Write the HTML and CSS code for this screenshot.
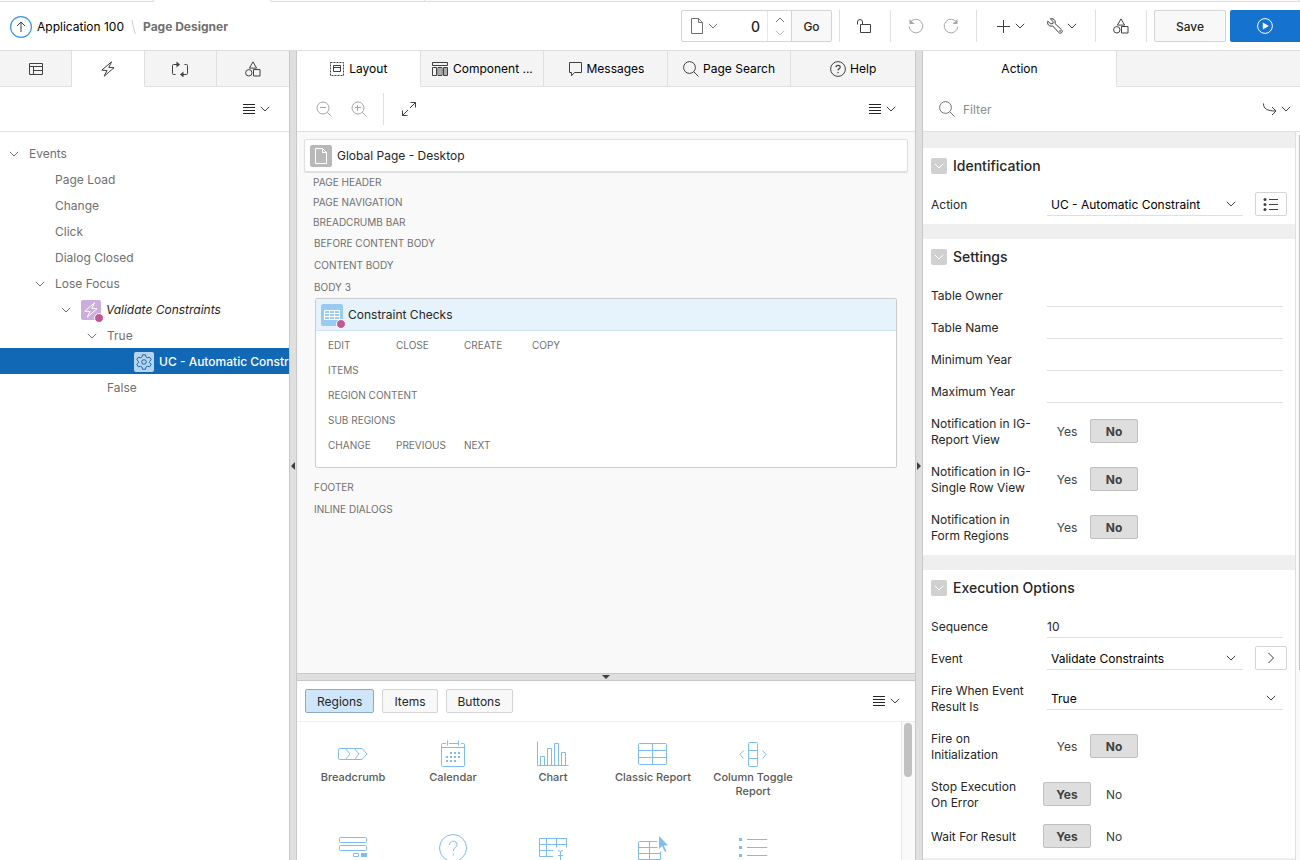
FILE: index.html
```html
<!DOCTYPE html>
<html lang="en">

<head>
    <meta charset="UTF-8">
    <meta name="viewport" content="width=device-width, initial-scale=1.0">
    <title>Page Designer</title>
    <link rel="stylesheet" href="styles.css">
</head>

<body>
    <!-- Icon definitions -->
    <svg class="sprite" aria-hidden="true">
        <symbol id="i-chev" viewBox="0 0 10 10"><path d="M.8 2.8 5 7 9.2 2.8" /></symbol>
        <symbol id="i-chev-up" viewBox="0 0 10 10"><path d="M1 7l4-4 4 4" /></symbol>
        <symbol id="i-chev-right" viewBox="0 0 16 16"><path d="M5.5 3l5 5-5 5" /></symbol>
        <symbol id="i-up" viewBox="0 0 22 22"><circle cx="11" cy="11" r="10.4" stroke="#3b97e3" stroke-width="1.2" /><path d="M11 16V6M7 10l4-4 4 4" /></symbol>
        <symbol id="i-page" viewBox="0 0 16 16"><path d="M2.5.5h7l4 4v11h-11zM9.5.5v4h4" /></symbol>
        <symbol id="i-lock" viewBox="0 0 16 16"><path d="M4.5 6.5h10v8h-10zM6.500 6.500V4A2.500 2.500 0 0 0 1.500 4v2.500" /></symbol>
        <symbol id="i-undo" viewBox="0 0 16 16"><path d="M2.2 4.5A6.8 6.8 0 1 1 1.2 8.5" /><path d="M1.5 1v5h5z" fill="currentColor" stroke="none" /></symbol>
        <symbol id="i-redo" viewBox="0 0 16 16"><path d="M13.8 4.5a6.8 6.8 0 1 0 1 4" /><path d="M14.5 1v5h-5z" fill="currentColor" stroke="none" /></symbol>
        <symbol id="i-plus" viewBox="0 0 16 16"><path d="M8.5 2v13M2 8.5h13" /></symbol>
        <symbol id="i-wrench" viewBox="0 0 16 16"><path d="M3.4.9l2.8 2.7-.3 2-2.1.3L.8 3.2C.1 5 .9 7.2 2.700 7.900c1 .4 2 .4 2.900 0l6.200 6.700c.9.900 2.200.800 2.900.100s.8-2-.1-2.900L8 5.500c.4-1 .3-2-.1-2.900C7.100.900 5.200.200 3.400.900z" /><circle cx="13" cy="13" r=".4" /></symbol>
        <symbol id="i-shapes" viewBox="0 0 16 16"><path d="M8 .9l3.600 6.200H4.400zM8.500 8.500h6.500V15H8.500z" /><circle cx="3.800" cy="11.800" r="3.200" /></symbol>
        <symbol id="i-run" viewBox="0 0 16 16"><circle cx="8" cy="8" r="7.400" /><path d="M5.800 4.400v7.200L11.800 8z" fill="currentColor" stroke="none" /></symbol>
        <symbol id="i-layout-tree" viewBox="0 0 16 16"><path d="M1.500 2.500h13v11h-13zM1.500 5.500h13M5.500 5.500v8M5.500 9.500h9" /></symbol>
        <symbol id="i-bolt" viewBox="0 0 16 16"><path d="M11.500.800L1.800 9.200l5.300.300-3 5.700 10-8.500-5.300-.3z" /></symbol>
        <symbol id="i-process" viewBox="0 0 18 16"><path d="M4.500 13.500h-2q-1 0-1-1v-8q0-1 1-1H6M13.500 3.500h2q1 0 1 1v8q0 1-1 1H12" /><path d="M5.500.500v6L9 3.500zM12.500 10.500v6L9 13.500z" fill="currentColor" stroke="none" /></symbol>
        <symbol id="i-menu" viewBox="0 0 12 12"><path d="M0 1.500h12M0 4.500h12M0 7.500h12M0 10.500h12" /></symbol>
        <symbol id="i-region" viewBox="0 0 16 16"><rect x="1.500" y="1.500" width="13" height="13" stroke-dasharray="2 1" /><path d="M4.500 4.500h7v6h-7zM4.500 6.500h7" /></symbol>
        <symbol id="i-component" viewBox="0 0 18 16"><path d="M1.500 1.500h15v3h-15zM1.500 6.500h4v8h-4zM7 6.500h4v8H7zM12.500 6.500h4v8h-4z" /><path d="M7.500 7h3v7h-3zM13 7h3v7h-3z" fill="#aaa" stroke="none" /></symbol>
        <symbol id="i-message" viewBox="0 0 16 16"><path d="M2.500 1.500h12v10h-7l-3 3.300v-3.300h-2z" /></symbol>
        <symbol id="i-search" viewBox="0 0 16 16"><circle cx="6.500" cy="6.500" r="5.900" /><path d="M10.800 10.800l4.700 4.700" /></symbol>
        <symbol id="i-help" viewBox="0 0 16 16"><circle cx="8" cy="8" r="7.400" /><path d="M6 6.300C6 3.600 10.200 3.700 10.200 6.200c0 1.600-2.200 1.600-2.200 3.300M8 11v1.200" stroke-width="1.200" /></symbol>
        <symbol id="i-zoom-out" viewBox="0 0 16 16"><circle cx="7" cy="7" r="6" /><path d="M4 6.500h6M11.300 11.300l4.200 4.200" /></symbol>
        <symbol id="i-zoom-in" viewBox="0 0 16 16"><circle cx="7" cy="7" r="6" /><path d="M4 6.500h6M6.500 4v6M11.300 11.300l4.200 4.200" /></symbol>
        <symbol id="i-expand" viewBox="0 0 16 16"><path d="M9.500 1.500h5v5M14.500 1.500L9 7M1.500 9.500v5h5M1.500 14.500L7 9" /></symbol>
        <symbol id="i-goto" viewBox="0 0 16 16"><path d="M1.500 2.500c0 5 3 7.500 12.500 7.500M10 6l4 4-4 4" /></symbol>
        <symbol id="i-gear" viewBox="0 0 16 16"><path d="M6.500.800h3l.5 2.100 1.600.900 2.100-.600 1.500 2.600-1.600 1.500v1.500l1.600 1.500-1.500 2.500-2.100-.6-1.600.9-.5 2.100h-3L6 13.100l-1.600-.9-2.100.6-1.500-2.500 1.600-1.500V7.300L.8 5.800l1.500-2.600 2.100.600 1.600-.900z" /><circle cx="8" cy="8" r="2.300" /></symbol>
        <symbol id="i-grid" viewBox="0 0 16 16"><path d="M.500 3.500h15v9H.500zM.500 6.500h15M.500 9.500h15M5.500 3.500v9M10.500 3.500v9" /></symbol>
        <symbol id="i-list" viewBox="0 0 16 16"><path d="M6 3.500h9M6 8.500h9M6 13.500h9" /><g fill="currentColor" stroke="none"><circle cx="2" cy="3.500" r="1.500" /><circle cx="2" cy="8.500" r="1.500" /><circle cx="2" cy="13.500" r="1.500" /></g></symbol>
        <symbol id="g-breadcrumb" viewBox="0 0 32 32"><path d="M2.500 10.500h22.500l5 5.500-5 5.500H2.500q-1 0-1-1v-9q0-1 1-1zM8.500 10.500l4.500 5.500-4.500 5.500M17.500 10.500l4.500 5.500-4.500 5.500" /></symbol>
        <symbol id="g-calendar" viewBox="0 0 32 32"><path d="M9 5.500H5.500q-1 0-1 1v21q0 1 1 1h21q1 0 1-1v-21q0-1-1-1H24M12 5.500h9M4.500 9.500h23M10.500 2.500v5M21.500 2.500v5" /><path d="M13 15h11M9 19h15M9 23h11" stroke-width="2" stroke-dasharray="2 2" /></symbol>
        <symbol id="g-chart" viewBox="0 0 32 32"><path d="M.500 3.500v24h31M3.500 27.500v-9h4v9M10.500 27.500v-17h4v17M17.500 27.500v-22h4v22M24.500 27.500v-13h4v13" /></symbol>
        <symbol id="g-classic" viewBox="0 0 32 32"><rect x="1.500" y="5.500" width="28" height="21" rx="1" /><path d="M1.500 12.500h28M1.500 19.500h28M15.500 5.500v21" /></symbol>
        <symbol id="g-toggle" viewBox="0 0 32 32"><rect x="11.500" y="4.500" width="9" height="24" rx="1" /><path d="M11.500 12.500h9M11.500 20.500h9M6.500 12.500L3 16.500l3.500 4M25.500 12.500l3.500 4-3.500 4" /></symbol>
        <symbol id="g-form" viewBox="0 0 32 32"><rect x="2.500" y="5.500" width="27" height="5" rx="1" /><rect x="2.500" y="13.500" width="27" height="5" rx="1" /><path d="M16.500 21.500h5v3h-5z" /><path d="M24 21h6v4h-6z" fill="currentColor" stroke="none" /></symbol>
        <symbol id="g-help" viewBox="0 0 32 32"><circle cx="16" cy="16" r="13.500" /><path d="M12.500 13c0-5 7.500-5 7.500-.5 0 3-3.700 3-3.700 6.500M16.300 21.500v2" /></symbol>
        <symbol id="g-edit" viewBox="0 0 32 32"><path d="M16 24.500H2.500v-18h27v9M2.500 12.500h27M2.500 18.500H16M9.500 6.500v18M19.500 6.500v9M21 18.500l2.500 1 2.500-1M23.500 19.500v11M21 23.500h5" /></symbol>
        <symbol id="g-interactive" viewBox="0 0 32 32"><path d="M20 9.500H2.500q-1 0-1 1v17h22v-8M1.500 15.500h19M1.500 21.500h22M12.500 9.500v18" /><path d="M22 4v13l3-3 3 6 1.500-.800-2.700-5.700H31z" fill="currentColor" stroke="none" /></symbol>
        <symbol id="g-list" viewBox="0 0 32 32"><path d="M10 7.500h20M10 15.500h20M10 23.500h20" /><path d="M2 6h3v3H2zM2 14h3v3H2zM2 22h3v3H2z" fill="currentColor" stroke="none" /></symbol>
    </svg>

    <!-- Bottom edge of the tab strip -->
    <div class="strip"><i></i><i class="on"></i><i></i><i></i></div>

    <header class="topbar">
        <nav class="crumbs">
            <a href="#" class="up" aria-label="Up"><svg><use href="#i-up" /></svg></a>
            <a href="#">Application 100</a>
            <span class="slash"></span>
            <strong>Page Designer</strong>
        </nav>
        <div class="page-picker">
            <button class="pick" aria-label="Pages"><svg class="icon"><use href="#i-page" /></svg><svg class="chev"><use href="#i-chev" /></svg></button>
            <input type="text" value="0" aria-label="Page number">
            <span class="spin">
                <button aria-label="Next page"><svg class="chev"><use href="#i-chev-up" /></svg></button>
                <button aria-label="Previous page" disabled><svg class="chev"><use href="#i-chev" /></svg></button>
            </span>
            <button class="go">Go</button>
        </div>
        <div class="tools tools-lock"><button aria-label="Unlocked"><svg class="icon"><use href="#i-lock" /></svg></button></div>
        <div class="tools tools-undo">
            <button aria-label="Undo" disabled><svg class="icon"><use href="#i-undo" /></svg></button>
            <button aria-label="Redo" disabled><svg class="icon"><use href="#i-redo" /></svg></button>
        </div>
        <div class="tools tools-create">
            <button aria-label="Create"><svg class="icon"><use href="#i-plus" /></svg><svg class="chev"><use href="#i-chev" /></svg></button>
            <button aria-label="Utilities"><svg class="icon"><use href="#i-wrench" /></svg><svg class="chev"><use href="#i-chev" /></svg></button>
        </div>
        <div class="tools tools-shared"><button aria-label="Shared Components"><svg class="icon"><use href="#i-shapes" /></svg></button></div>
        <div class="tools tools-save">
            <button class="save">Save</button>
            <button class="run" aria-label="Save and Run Page"><svg class="icon"><use href="#i-run" /></svg></button>
        </div>
    </header>

    <main class="designer">
        <!-- Left pane: dynamic actions tree -->
        <section class="pane left">
            <div class="tabs">
                <button aria-label="Rendering"><svg class="icon"><use href="#i-layout-tree" /></svg></button>
                <button class="active" aria-label="Dynamic Actions"><svg class="icon"><use href="#i-bolt" /></svg></button>
                <button aria-label="Processing"><svg class="icon wide"><use href="#i-process" /></svg></button>
                <button aria-label="Page Shared Components"><svg class="icon"><use href="#i-shapes" /></svg></button>
            </div>
            <div class="toolbar">
                <button class="menu" aria-label="Menu"><svg class="lines"><use href="#i-menu" /></svg><svg class="chev"><use href="#i-chev" /></svg></button>
            </div>
            <ul class="tree">
                <li><svg class="chev"><use href="#i-chev" /></svg>Events</li>
                <li class="l1 leaf">Page Load</li>
                <li class="l1 leaf">Change</li>
                <li class="l1 leaf">Click</li>
                <li class="l1 leaf">Dialog Closed</li>
                <li class="l1"><svg class="chev"><use href="#i-chev" /></svg>Lose Focus</li>
                <li class="l2"><svg class="chev"><use href="#i-chev" /></svg><span class="badge purple"><svg class="icon"><use href="#i-bolt" /></svg></span><em>Validate Constraints</em></li>
                <li class="l3"><svg class="chev"><use href="#i-chev" /></svg>True</li>
                <li class="l4 leaf selected"><span class="badge gear"><svg class="icon"><use href="#i-gear" /></svg></span>UC - Automatic Constraint</li>
                <li class="l3 leaf">False</li>
            </ul>
        </section>

        <div class="split"><i class="arrow west"></i></div>

        <!-- Centre pane: layout and gallery -->
        <section class="pane center">
            <div class="tabs">
                <button class="active"><svg class="icon"><use href="#i-region" /></svg>Layout</button>
                <button><svg class="icon wide"><use href="#i-component" /></svg>Component ...</button>
                <button><svg class="icon"><use href="#i-message" /></svg>Messages</button>
                <button><svg class="icon"><use href="#i-search" /></svg>Page Search</button>
                <button><svg class="icon"><use href="#i-help" /></svg>Help</button>
            </div>
            <div class="toolbar">
                <button class="zoom" aria-label="Zoom Out" disabled><svg class="icon"><use href="#i-zoom-out" /></svg></button>
                <button class="zoom" aria-label="Zoom In" disabled><svg class="icon"><use href="#i-zoom-in" /></svg></button>
                <button class="expand" aria-label="Expand"><svg class="icon"><use href="#i-expand" /></svg></button>
                <button class="menu" aria-label="Menu"><svg class="lines"><use href="#i-menu" /></svg><svg class="chev"><use href="#i-chev" /></svg></button>
            </div>
            <div class="canvas">
                <div class="global"><span class="badge grey"><svg class="icon"><use href="#i-page" /></svg></span>Global Page - Desktop</div>
                <ul class="slots tight">
                    <li>Page Header</li>
                    <li>Page Navigation</li>
                    <li>Breadcrumb Bar</li>
                </ul>
                <ul class="slots">
                    <li>Before Content Body</li>
                    <li>Content Body</li>
                    <li>Body 3</li>
                </ul>
                <div class="region">
                    <h3><span class="badge blue"><svg class="icon"><use href="#i-grid" /></svg></span>Constraint Checks</h3>
                    <div class="region-body">
                        <div><span>Edit</span><span>Close</span><span>Create</span><span>Copy</span></div>
                        <div>Items</div>
                        <div>Region Content</div>
                        <div>Sub Regions</div>
                        <div><span>Change</span><span>Previous</span><span>Next</span></div>
                    </div>
                </div>
                <ul class="slots">
                    <li>Footer</li>
                    <li>Inline Dialogs</li>
                </ul>
            </div>
            <div class="split-h"><i class="arrow south"></i></div>
            <div class="gallery-bar">
                <button class="pill on">Regions</button>
                <button class="pill">Items</button>
                <button class="pill">Buttons</button>
                <button class="menu" aria-label="Menu"><svg class="lines"><use href="#i-menu" /></svg><svg class="chev"><use href="#i-chev" /></svg></button>
            </div>
            <div class="gallery">
                <ul>
                    <li><svg><use href="#g-breadcrumb" /></svg>Breadcrumb</li>
                    <li><svg><use href="#g-calendar" /></svg>Calendar</li>
                    <li><svg><use href="#g-chart" /></svg>Chart</li>
                    <li><svg><use href="#g-classic" /></svg>Classic Report</li>
                    <li><svg><use href="#g-toggle" /></svg>Column Toggle Report</li>
                    <li class="row-start"><svg><use href="#g-form" /></svg></li>
                    <li><svg><use href="#g-help" /></svg></li>
                    <li><svg><use href="#g-edit" /></svg></li>
                    <li><svg><use href="#g-interactive" /></svg></li>
                    <li><svg><use href="#g-list" /></svg></li>
                </ul>
                <div class="scroll"><i></i></div>
            </div>
        </section>

        <div class="split"><i class="arrow east"></i></div>

        <!-- Right pane: property editor -->
        <section class="pane right">
            <div class="tabs"><button class="active">Action</button><span></span></div>
            <div class="toolbar">
                <svg class="icon search"><use href="#i-search" /></svg>
                <input type="text" placeholder="Filter" aria-label="Filter">
                <button class="menu" aria-label="Go to Group"><svg class="icon"><use href="#i-goto" /></svg><svg class="chev"><use href="#i-chev" /></svg></button>
            </div>
            <div class="props">
                <form>
                    <section>
                        <h2><button type="button" aria-label="Collapse"><svg class="chev"><use href="#i-chev" /></svg></button>Identification</h2>
                        <div class="prop">
                            <label for="action">Action</label>
                            <span class="select"><select id="action"><option>UC - Automatic Constraint</option></select><svg class="chev"><use href="#i-chev" /></svg></span>
                            <button type="button" class="side" aria-label="List"><svg class="icon"><use href="#i-list" /></svg></button>
                        </div>
                    </section>
                    <section>
                        <h2><button type="button" aria-label="Collapse"><svg class="chev"><use href="#i-chev" /></svg></button>Settings</h2>
                        <div class="prop"><label for="owner">Table Owner</label><input type="text" id="owner"></div>
                        <div class="prop"><label for="tname">Table Name</label><input type="text" id="tname"></div>
                        <div class="prop"><label for="miny">Minimum Year</label><input type="text" id="miny"></div>
                        <div class="prop"><label for="maxy">Maximum Year</label><input type="text" id="maxy"></div>
                        <div class="prop" role="radiogroup" aria-labelledby="p1">
                            <span class="label" id="p1">Notification in IG-Report View</span>
                            <span class="yesno"><label><input type="radio" name="r1">Yes</label><label><input type="radio" name="r1" checked>No</label></span>
                        </div>
                        <div class="prop" role="radiogroup" aria-labelledby="p2">
                            <span class="label" id="p2">Notification in IG-Single Row View</span>
                            <span class="yesno"><label><input type="radio" name="r2">Yes</label><label><input type="radio" name="r2" checked>No</label></span>
                        </div>
                        <div class="prop" role="radiogroup" aria-labelledby="p3">
                            <span class="label" id="p3">Notification in Form Regions</span>
                            <span class="yesno"><label><input type="radio" name="r3">Yes</label><label><input type="radio" name="r3" checked>No</label></span>
                        </div>
                    </section>
                    <section>
                        <h2><button type="button" aria-label="Collapse"><svg class="chev"><use href="#i-chev" /></svg></button>Execution Options</h2>
                        <div class="prop"><label for="seq">Sequence</label><input type="text" id="seq" value="10"></div>
                        <div class="prop">
                            <label for="event">Event</label>
                            <span class="select"><select id="event"><option>Validate Constraints</option></select><svg class="chev"><use href="#i-chev" /></svg></span>
                            <button type="button" class="side" aria-label="Go to Event"><svg class="icon"><use href="#i-chev-right" /></svg></button>
                        </div>
                        <div class="prop">
                            <label for="fire">Fire When Event Result Is</label>
                            <span class="select full"><select id="fire"><option>True</option></select><svg class="chev"><use href="#i-chev" /></svg></span>
                        </div>
                        <div class="prop" role="radiogroup" aria-labelledby="p4">
                            <span class="label" id="p4">Fire on Initialization</span>
                            <span class="yesno"><label><input type="radio" name="r4">Yes</label><label><input type="radio" name="r4" checked>No</label></span>
                        </div>
                        <div class="prop" role="radiogroup" aria-labelledby="p5">
                            <span class="label" id="p5">Stop Execution On Error</span>
                            <span class="yesno"><label><input type="radio" name="r5" checked>Yes</label><label><input type="radio" name="r5">No</label></span>
                        </div>
                        <div class="prop" role="radiogroup" aria-labelledby="p6">
                            <span class="label" id="p6">Wait For Result</span>
                            <span class="yesno"><label><input type="radio" name="r6" checked>Yes</label><label><input type="radio" name="r6">No</label></span>
                        </div>
                    </section>
                </form>
                <div class="scroll"><i></i></div>
            </div>
        </section>
    </main>
</body>

</html>
```
FILE: styles.css
```css
/* General reset */
* {
    margin: 0;
    padding: 0;
    box-sizing: border-box;
}

body {
    display: flex;
    flex-direction: column;
    height: 100vh;
    overflow: hidden;
    background: #fff;
    color: #262626;
    font: 12px/16px Inter, "Liberation Sans", sans-serif;
}

ul {
    list-style: none;
}

button,
input,
select {
    font: inherit;
    color: inherit;
    background: none;
    border: 0;
    outline: 0;
    border-radius: 0;
}

button {
    display: flex;
    align-items: center;
    justify-content: center;
    cursor: pointer;
}

a {
    color: #000;
    text-decoration: none;
}

svg {
    fill: none;
    stroke: currentColor;
    stroke-width: 1;
    flex: none;
}

.sprite {
    position: absolute;
    width: 0;
    height: 0;
}

.icon {
    width: 16px;
    height: 16px;
    color: #404040;
}

.icon.wide {
    width: 18px;
}

.chev {
    width: 10px;
    height: 10px;
    color: #404040;
}

.lines {
    width: 12px;
    height: 12px;
}

button:disabled .icon {
    color: #a6a6a6;
}

/* Tab strip edge */
.strip {
    display: flex;
    flex: none;
    height: 2px;
}

.strip i {
    width: 154px;
    background: #f8f8f8;
    border-bottom: 1px solid #dfdfdf;
    border-right: 1px solid #dfdfdf;
}

.strip .on {
    width: 117px;
    background: #fff;
    border-bottom-color: #fff;
}

.strip i:last-child {
    flex: 1;
}

/* Header */
.topbar {
    display: flex;
    align-items: center;
    flex: none;
    height: 49px;
    border-bottom: 1px solid #dfdfdf;
}

.crumbs {
    display: flex;
    align-items: center;
    flex: 1;
    padding: 1px 0 0 10px;
}

.crumbs svg {
    display: block;
    width: 22px;
    height: 22px;
    margin-right: 5px;
    color: #404040;
}

.slash {
    width: 1px;
    height: 14px;
    margin: 0 9px;
    background: #ccc;
    transform: rotate(-14deg);
}

.crumbs strong {
    color: #707070;
}

.page-picker {
    display: flex;
    height: 32px;
    border: 1px solid #d4d4d4;
    border-radius: 2px;
}

.pick {
    gap: 3px;
    padding: 0 8px 0 7px;
}

.pick .icon,
.pick .chev {
    color: #707070;
}

.page-picker input {
    width: 41px;
    padding: 2px 7px 0 0;
    text-align: right;
    font-size: 14px;
    font-weight: 500;
}

.spin {
    display: flex;
    flex-direction: column;
    justify-content: center;
    gap: 3px;
    width: 24px;
    border-left: 1px solid #e6e6e6;
}

.spin .chev {
    color: #707070;
}

.spin button:disabled .chev {
    color: #bbb;
}

.go {
    width: 40px;
    padding-top: 1px;
    border-left: 1px solid #d4d4d4;
    background: #f8f8f8;
    font-weight: 500;
}

.tools {
    display: flex;
    align-items: center;
    justify-content: center;
    height: 32px;
    border-left: 1px solid #dfdfdf;
}

.tools button {
    gap: 4px;
}

.tools-lock {
    width: 51px;
    padding-right: 2px;
    margin-left: 7px;
}

.tools-undo {
    width: 86px;
    gap: 19px;
}

.tools-create {
    width: 119px;
    gap: 22px;
}

.tools-shared {
    width: 51px;
}

.tools-save {
    padding-left: 7px;
    gap: 4px;
}

.tools-save button {
    height: 32px;
}

.save {
    width: 72px;
    padding-top: 1px;
    border: 1px solid #d4d4d4;
    border-radius: 2px;
    background: #f8f8f8;
    font-weight: 500;
}

.run {
    width: 70px;
    border-radius: 2px 0 0 2px;
    background: #1573cf;
}

.run .icon {
    color: #fff;
}

/* Panes */
.designer {
    display: grid;
    grid-template-columns: 289px 8px minmax(0, 1fr) 8px 377px;
    flex: 1;
    min-height: 0;
}

.pane {
    display: flex;
    flex-direction: column;
    min-width: 0;
    min-height: 0;
    overflow: hidden;
}

.split,
.split-h {
    display: flex;
    align-items: center;
    justify-content: center;
    background: #dfdfdf;
}

.split {
    padding-top: 20px;
    border: solid #c8c8c8;
    border-width: 0 1px;
}

.split-h {
    flex: none;
    height: 8px;
    border: solid #c8c8c8;
    border-width: 1px 0;
}

.arrow {
    border: 4px solid transparent;
}

.west {
    border-right-color: #404040;
    border-left-width: 0;
}

.east {
    border-left-color: #404040;
    border-right-width: 0;
}

.south {
    border-top-color: #404040;
    border-bottom-width: 0;
}

.tabs {
    display: grid;
    grid-auto-flow: column;
    grid-auto-columns: 1fr;
    flex: none;
    height: 36px;
}

.tabs > * {
    gap: 4px;
    padding-top: 1px;
    background: #f4f4f4;
    border-bottom: 1px solid #dfdfdf;
    border-right: 1px solid #dfdfdf;
    color: #000;
    white-space: nowrap;
}

.tabs > :last-child {
    border-right: 0;
}

.tabs .active {
    background: #fff;
    border-bottom-color: #fff;
}

.right .tabs {
    grid-template-columns: 194px 1fr;
}

.toolbar {
    display: flex;
    align-items: center;
    flex: none;
    height: 45px;
    border-bottom: 1px solid #dfdfdf;
}

.menu {
    gap: 5px;
    margin-left: auto;
    margin-right: 19px;
}

.zoom {
    width: 35px;
}

.toolbar .zoom:first-child {
    margin-left: 9px;
}

.expand {
    width: 50px;
    height: 32px;
    margin-left: 7px;
    border-left: 1px solid #dfdfdf;
}

/* Tree */
.tree {
    padding-top: 8px;
    color: #707070;
}

.tree li {
    display: flex;
    align-items: center;
    height: 26px;
    padding: 1px 0 0 9px;
    white-space: nowrap;
}

.tree .chev {
    margin-right: 10px;
    color: #707070;
}

.tree .l1 {
    padding-left: 35px;
}

.tree .l2 {
    padding-left: 61px;
}

.tree .l3 {
    padding-left: 87px;
}

.tree .l1.leaf {
    padding-left: 55px;
}

.tree .l3.leaf {
    padding-left: 107px;
}

.tree .l4.leaf {
    padding-left: 134px;
}

.tree em {
    color: #262626;
}

.tree .selected {
    background: #1168b5;
    color: #fff;
    font-weight: 500;
}

.badge {
    position: relative;
    display: flex;
    align-items: center;
    justify-content: center;
    flex: none;
    width: 22px;
    height: 22px;
    margin-right: 5px;
    border-radius: 2px;
}

.badge .icon {
    color: #fff;
}

.tree .badge {
    width: 20px;
    height: 20px;
}

.purple {
    background: #cbaedb;
}

.gear {
    background: #b9d5ec;
}

.gear .icon {
    color: #1168b5;
}

.grey {
    background: #b8b8b8;
}

.blue {
    background: #99cbf2;
}

/* Changed marker */
.purple::after,
.blue::after {
    content: "";
    position: absolute;
    right: -3px;
    bottom: -3px;
    width: 8px;
    height: 8px;
    border: 1px solid #fff;
    border-radius: 50%;
    background: #bf5a92;
}

/* Layout canvas */
.canvas {
    flex: 1;
    min-height: 0;
    overflow: hidden;
    padding: 7px;
    background: #f9f9f9;
}

.global {
    display: flex;
    align-items: center;
    height: 33px;
    padding: 1px 0 0 5px;
    border: 1px solid #dfdfdf;
    border-radius: 2px;
    background: #fff;
    box-shadow: 0 1px 1px #dfdfdf;
}

.slots {
    padding-left: 10px;
}

.slots,
.region-body {
    color: #707070;
    font-size: 10px;
    line-height: 22px;
    text-transform: uppercase;
}

.slots.tight {
    padding-left: 9px;
    line-height: 20px;
}

.region {
    margin: 0 11px 8px;
    border: 1px solid #ccc;
    border-radius: 2px;
    background: #fff;
}

.region h3 {
    display: flex;
    align-items: center;
    height: 32px;
    padding: 1px 0 0 5px;
    border-bottom: 1px solid #cfe2f0;
    background: #e6f3fd;
    font-size: 12px;
    font-weight: 400;
}

.region-body {
    padding: 2px 12px 9px;
    line-height: 25px;
}

.region-body div {
    display: flex;
}

.region-body span {
    width: 68px;
}

/* Gallery */
.gallery-bar {
    display: flex;
    align-items: center;
    flex: none;
    gap: 8px;
    height: 41px;
    padding-left: 8px;
    border-bottom: 1px solid #eee;
}

.gallery-bar .menu {
    margin-right: 15px;
}

.pill {
    height: 24px;
    padding: 1px 11px 0;
    border: 1px solid #d4d4d4;
    border-radius: 2px;
    background: #f8f8f8;
}

.pill.on {
    border-color: #8fabc2;
    background: #cfe6fa;
}

.gallery {
    display: flex;
    flex: none;
    height: 138px;
    overflow: hidden;
}

.gallery ul {
    display: grid;
    grid-template-columns: repeat(auto-fill, 100px);
    grid-auto-rows: 94px;
    flex: 1;
    padding: 16px 50px 0 6px;
}

.gallery li {
    display: flex;
    flex-direction: column;
    align-items: center;
    padding: 0 8px;
    color: #595959;
    font-size: 11px;
    font-weight: 500;
    line-height: 14px;
    text-align: center;
}

.gallery svg {
    width: 32px;
    height: 32px;
    color: #7fbdf0;
}

.gallery .scroll {
    width: 14px;
    padding: 1px 2px;
    border-left: 1px solid #e6e6e6;
    background: #fafafa;
}

.gallery .scroll i {
    display: block;
    width: 8px;
    height: 54px;
    border-radius: 4px;
    background: #c1c1c1;
}

/* Property editor */
.right .search {
    margin: 0 8px 0 16px;
    color: #707070;
}

.right .toolbar input {
    flex: 1;
    min-width: 0;
    padding-top: 1px;
}

.right .toolbar input::placeholder {
    color: #8c8c8c;
}

.right .menu {
    gap: 3px;
    margin-right: 9px;
}

.props {
    display: flex;
    flex: 1;
    min-height: 0;
    overflow: hidden;
    background: #efefef;
}

.props form {
    display: flex;
    flex-direction: column;
    flex: 1;
    gap: 15px;
    padding-top: 16px;
}

.props section {
    flex: none;
    padding: 0 8px 3px;
    background: #fff;
}

.props .scroll {
    width: 5px;
    padding-top: 3px;
    border-left: 1px solid #dfdfdf;
    background: #fafafa;
}

.props .scroll i {
    display: block;
    height: 535px;
    margin-left: 3px;
    background: #c1c1c1;
}

.props h2 {
    display: flex;
    align-items: center;
    gap: 6px;
    height: 41px;
    padding-bottom: 5px;
    font-size: 14px;
    font-weight: 500;
}

.props h2 button {
    width: 16px;
    height: 16px;
    border-radius: 2px;
    background: #d0d0d0;
}

.props h2 .chev {
    color: #fff;
}

.prop {
    display: flex;
    align-items: center;
    padding: 3px 0 5px;
}

.prop > label,
.prop > .label {
    width: 116px;
    padding: 5px 12px 3px 0;
}

.prop > input,
.select {
    position: relative;
    flex: 1;
    min-width: 0;
    height: 24px;
    border-bottom: 1px solid #dfdfdf;
}

.prop > input {
    padding-top: 2px;
}

.prop > input,
.select.full {
    margin-right: 4px;
}

.select select {
    width: 100%;
    height: 23px;
    padding: 2px 0 0 4px;
    color: #000;
    appearance: none;
}

.select .chev {
    position: absolute;
    top: 7px;
    right: 7px;
    pointer-events: none;
}

.side {
    width: 32px;
    height: 24px;
    margin-left: 12px;
    border: 1px solid #d4d4d4;
    border-radius: 2px;
}

.yesno {
    display: flex;
    margin-left: -4px;
    padding: 2px 0;
    color: #404040;
}

.yesno label {
    width: 48px;
    height: 24px;
    border: 1px solid transparent;
    border-radius: 2px;
    line-height: 24px;
    text-align: center;
}

.yesno label + label {
    margin-left: -1px;
}

.yesno label:has(:checked) {
    border-color: #bfbfbf;
    background: #dedede;
    font-weight: 700;
}

.yesno input {
    position: absolute;
    appearance: none;
}
```
